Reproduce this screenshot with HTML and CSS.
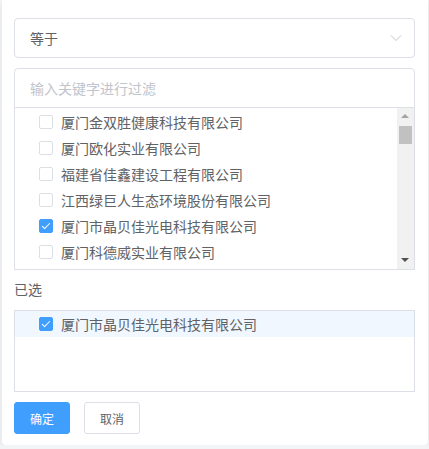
FILE: index.html
```html
<!DOCTYPE html>
<html>
<head>
  <meta charset="UTF-8">
  <title>筛选</title>
  <link rel="stylesheet" href="styles.css">
</head>
<body>
  <div class="popover">
    <!-- Operator select -->
    <div class="select">
      <span>等于</span>
      <svg class="arrow" width="12" height="8" viewBox="0 0 12 8">
        <path d="M1 1.5 L6 6.5 L11 1.5" fill="none" stroke="#c0c4cc" stroke-width="1"/>
      </svg>
    </div>

    <!-- Filter + options -->
    <div class="filter">输入关键字进行过滤</div>
    <div class="tree">
      <div class="tree-body">
        <div class="node"><span class="checkbox"></span>厦门金双胜健康科技有限公司</div>
        <div class="node"><span class="checkbox"></span>厦门欧化实业有限公司</div>
        <div class="node"><span class="checkbox"></span>福建省佳鑫建设工程有限公司</div>
        <div class="node"><span class="checkbox"></span>江西绿巨人生态环境股份有限公司</div>
        <div class="node"><span class="checkbox checked"></span>厦门市晶贝佳光电科技有限公司</div>
        <div class="node"><span class="checkbox"></span>厦门科德威实业有限公司</div>
      </div>
      <div class="scrollbar">
        <span class="sb-up"></span>
        <span class="sb-thumb"></span>
        <span class="sb-fill"></span>
        <span class="sb-down"></span>
      </div>
    </div>

    <!-- Selected -->
    <div class="label">已选</div>
    <div class="selected">
      <div class="node current"><span class="checkbox checked"></span>厦门市晶贝佳光电科技有限公司</div>
    </div>

    <div class="actions">
      <button class="btn primary">确定</button>
      <button class="btn">取消</button>
    </div>
  </div>
</body>
</html>
```

FILE: styles.css
```css
* { box-sizing: border-box; }
body {
  margin: 0;
  background-color: #f3f4f6;
  font-family: "Liberation Sans", "Noto Sans CJK SC", sans-serif;
  font-size: 14px;
  color: #606266;
}
.popover {
  width: 426px;
  margin-left: 2px;
  background-color: #fff;
  padding: 18px 13px 11px 12px;
  border-radius: 0 0 4px 4px;
  box-shadow: 0 2px 10px rgba(0,0,0,0.08);
}
.select {
  height: 40px;
  border: 1px solid #dcdfe6;
  border-radius: 4px;
  padding: 0 12px 0 15px;
  display: flex;
  align-items: center;
  justify-content: space-between;
}
.filter {
  margin-top: 10px;
  height: 40px;
  border: 1px solid #dcdfe6;
  border-radius: 4px 4px 0 0;
  padding: 0 15px;
  display: flex;
  align-items: center;
  color: #c0c4cc;
}
.tree {
  height: 162px;
  border: 1px solid #dcdfe6;
  border-top: none;
  display: flex;
}
.tree-body {
  flex: 1;
  overflow: hidden;
  padding-top: 1px;
}
.node {
  height: 26px;
  display: flex;
  align-items: center;
  padding-left: 24px;
  white-space: nowrap;
}
.checkbox {
  width: 14px;
  height: 14px;
  border: 1px solid #dcdfe6;
  border-radius: 2px;
  background-color: #fff;
  margin-right: 8px;
  flex-shrink: 0;
  position: relative;
}
.checkbox.checked {
  background-color: #409eff;
  border-color: #409eff;
}
.checkbox.checked:after {
  content: "";
  position: absolute;
  left: 4px;
  top: 1px;
  width: 3px;
  height: 7px;
  border: 1px solid #fff;
  border-left: 0;
  border-top: 0;
  transform: rotate(45deg);
}
/* fake classic scrollbar */
.scrollbar {
  width: 17px;
  background-color: #f1f1f1;
  display: flex;
  flex-direction: column;
  align-items: center;
}
.sb-up, .sb-down {
  height: 17px;
  width: 17px;
  position: relative;
}
.sb-up:before, .sb-down:before {
  content: "";
  position: absolute;
  left: 4px;
  border-left: 4px solid transparent;
  border-right: 4px solid transparent;
}
.sb-up:before { top: 6px; border-bottom: 4px solid #a3a3a3; }
.sb-down:before { top: 6px; border-top: 4px solid #505050; }
.sb-thumb {
  width: 13px;
  height: 18px;
  background-color: #c1c1c1;
  margin-top: 1px;
}
.sb-fill { flex: 1; }
.label {
  margin-top: 10px;
  line-height: 20px;
  margin-bottom: 10px;
}
.selected {
  height: 82px;
  border: 1px solid #dcdfe6;
}
.node.current { background-color: #f0f7ff; }
.actions {
  margin-top: 10px;
  display: flex;
  gap: 14px;
}
.btn {
  width: 56px;
  height: 32px;
  font-family: inherit;
  font-size: 12px;
  border: 1px solid #dcdfe6;
  border-radius: 3px;
  background-color: #fff;
  color: #606266;
  padding: 0;
  cursor: pointer;
}
.btn.primary {
  background-color: #409eff;
  border-color: #409eff;
  color: #fff;
}
```
